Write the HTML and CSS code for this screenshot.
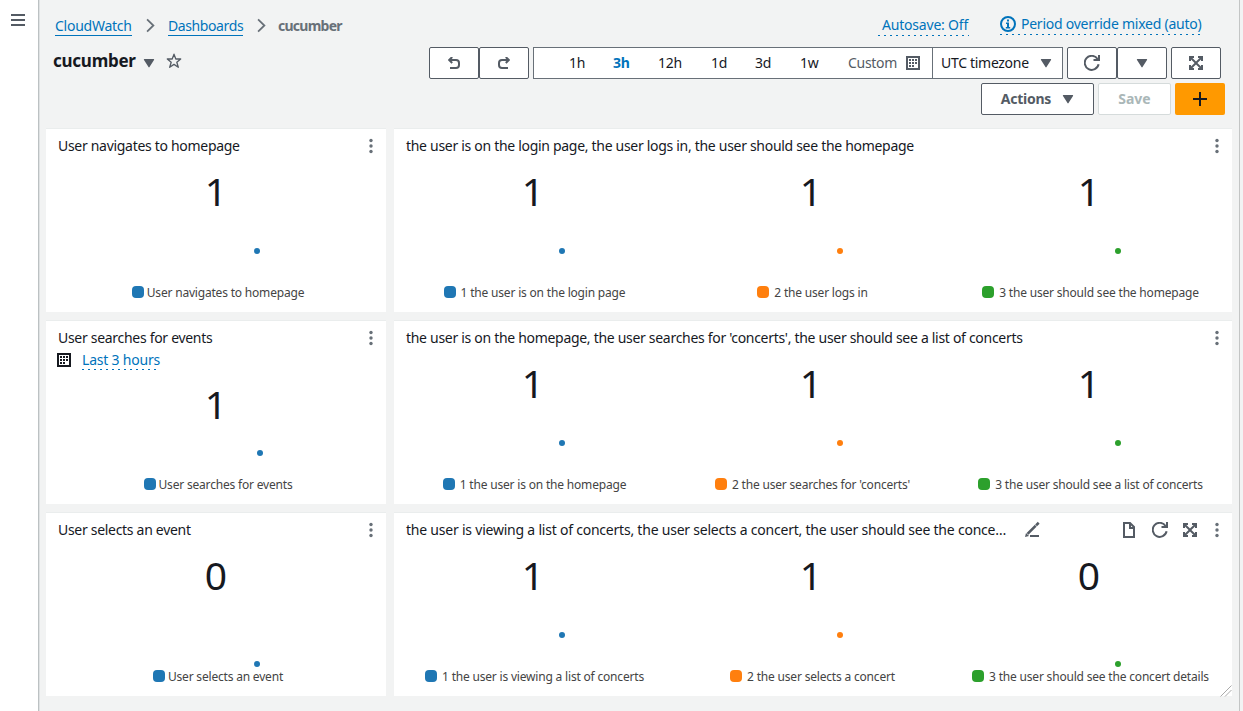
FILE: index.html
```html
<!DOCTYPE html>
<html lang="en">
<head>
<meta charset="utf-8">
<title>CloudWatch dashboard - cucumber</title>
<link rel="stylesheet" href="styles.css">
</head>
<body>
<svg width="0" height="0" class="defs">
  <symbol id="caret" viewBox="0 0 12 10"><path d="M1.5 1h9a.6.6 0 0 1 .5 1L6.5 9a.6.6 0 0 1-1 0L1 2a.6.6 0 0 1 .5-1z" fill="currentColor"/></symbol>
  <symbol id="chev" viewBox="0 0 10 16"><path d="M1.2 1.2 8.2 8l-7 6.8" fill="none" stroke="currentColor" stroke-width="2"/></symbol>
  <symbol id="refresh" viewBox="0 0 16 16"><path d="M14.6 9.3A7 7 0 1 1 13.6 4" fill="none" stroke="currentColor" stroke-width="2"/><path d="M15 0v5H9.500" fill="none" stroke="currentColor" stroke-width="2"/></symbol>
  <symbol id="expand" viewBox="0 0 14 14"><path d="M0 0h5v2H3.4l3.6 3.6L10.600 2H9V0h5v5h-2V3.4L8.400 7l3.6 3.6V9h2v5H9v-2h1.600L7 8.400 3.4 12H5v2H0V9h2v1.600L5.600 7 2 3.400V5H0z" fill="currentColor"/></symbol>
  <symbol id="cal" viewBox="0 0 14 14"><rect x="1" y="1" width="12" height="12" fill="none" stroke="currentColor" stroke-width="2"/><path d="M3 3h2v2H3zM6 3h2v2H6zM9 3h2v2H9zM3 6h2v2H3zM6 6h2v2H6zM9 6h2v2H9zM3 9h2v2H3zM6 9h2v2H6z" fill="currentColor"/></symbol>
  <symbol id="dots" viewBox="0 0 4 16"><g fill="currentColor"><circle cx="2" cy="2.500" r="1.700"/><circle cx="2" cy="8" r="1.700"/><circle cx="2" cy="13.500" r="1.700"/></g></symbol>
  <symbol id="undo" viewBox="0 0 12 12"><path d="M1 3h7a3 3 0 0 1 3 3v2a3 3 0 0 1-3 3H2M4.200 0 1.200 3l3 3" fill="none" stroke="currentColor" stroke-width="2"/></symbol>
</svg>
<div class="app">
  <nav class="rail"><svg class="burger" viewBox="0 0 14 12"><path d="M0 1h14M0 6h14M0 11h14" stroke="currentColor" stroke-width="2"/></svg></nav>
  <main class="main">
    <header class="top">
      <div class="heading">
        <div class="crumbs">
          <a class="crumb c1">CloudWatch</a>
          <svg class="chev"><use href="#chev"/></svg>
          <a class="crumb c2">Dashboards</a>
          <svg class="chev"><use href="#chev"/></svg>
          <span class="here">cucumber</span>
        </div>
        <div class="name"><h1>cucumber</h1><svg class="caret"><use href="#caret"/></svg>
          <svg class="star" viewBox="0 0 16 16"><path d="M8 1.200 9.800 6h4.900l-3.900 3.200L12.300 14.300 8 11.400l-4.300 2.900 1.500-5.100L1.300 6h4.900z" fill="none" stroke="currentColor" stroke-width="1.300" stroke-linejoin="round"/></svg>
        </div>
      </div>
      <div class="controls">
        <div class="links">
          <span class="dotlink autosave">Autosave: Off</span>
          <span class="dotlink period"><svg class="info" viewBox="0 0 16 16"><circle cx="8" cy="8" r="7" fill="none" stroke="currentColor" stroke-width="2"/><path d="M7 3.500h2v2H7zM6 6.500h3V11h1.200v1.500H5.800V11H7V8H6z" fill="currentColor"/></svg><span>Period override mixed (auto)</span></span>
        </div>
        <div class="toolbar">
          <div class="group">
            <button class="btn sq"><svg class="undo"><use href="#undo"/></svg></button>
            <button class="btn sq"><svg class="undo flip"><use href="#undo"/></svg></button>
          </div>
          <div class="ranges">
            <span class="r r1">1h</span><span class="r r2 on">3h</span><span class="r r3">12h</span><span class="r r4">1d</span><span class="r r5">3d</span><span class="r r6">1w</span><span class="r custom">Custom</span><svg class="cal"><use href="#cal"/></svg>
          </div>
          <div class="zone"><span>UTC timezone</span><svg class="caret"><use href="#caret"/></svg></div>
          <div class="group refreshers">
            <button class="btn sq"><svg class="i16"><use href="#refresh"/></svg></button>
            <button class="btn sq"><svg class="caret"><use href="#caret"/></svg></button>
          </div>
          <button class="btn sq"><svg class="i14"><use href="#expand"/></svg></button>
        </div>
        <div class="actions">
          <button class="btn act"><span>Actions</span><svg class="caret"><use href="#caret"/></svg></button>
          <button class="btn save">Save</button>
          <button class="add"><svg class="plus" viewBox="0 0 14 14"><path d="M7 0v14M0 7h14" stroke="currentColor" stroke-width="2"/></svg></button>
        </div>
      </div>
    </header>
    <section class="grid">
      <article class="card">
        <div class="head"><h2>User navigates to homepage</h2><svg class="dots"><use href="#dots"/></svg></div>
        <div class="metrics"><div class="metric blue"><div class="value">1</div><svg class="spark"><circle cx="211" cy="29" r="3"/></svg><div class="legend"><i></i><span>User navigates to homepage</span></div></div></div>
      </article>
      <article class="card wide">
        <div class="head"><h2>the user is on the login page, the user logs in, the user should see the homepage</h2><svg class="dots"><use href="#dots"/></svg></div>
        <div class="metrics">
          <div class="metric blue"><div class="value">1</div><svg class="spark"><circle cx="169" cy="29" r="3"/></svg><div class="legend"><i></i><span>1 the user is on the login page</span></div></div>
          <div class="metric orange"><div class="value">1</div><svg class="spark"><circle cx="169" cy="29" r="3"/></svg><div class="legend"><i></i><span>2 the user logs in</span></div></div>
          <div class="metric green"><div class="value">1</div><svg class="spark"><circle cx="169" cy="29" r="3"/></svg><div class="legend"><i></i><span>3 the user should see the homepage</span></div></div>
        </div>
      </article>
      <article class="card ranged">
        <div class="head"><h2>User searches for events</h2><svg class="dots"><use href="#dots"/></svg></div>
        <div class="period-row"><svg class="cal"><use href="#cal"/></svg><span class="dotlink">Last 3 hours</span></div>
        <div class="metrics"><div class="metric blue"><div class="value">1</div><svg class="spark"><circle cx="214" cy="20" r="3"/></svg><div class="legend"><i></i><span>User searches for events</span></div></div></div>
      </article>
      <article class="card wide">
        <div class="head"><h2>the user is on the homepage, the user searches for 'concerts', the user should see a list of concerts</h2><svg class="dots"><use href="#dots"/></svg></div>
        <div class="metrics">
          <div class="metric blue"><div class="value">1</div><svg class="spark"><circle cx="169" cy="29" r="3"/></svg><div class="legend"><i></i><span>1 the user is on the homepage</span></div></div>
          <div class="metric orange"><div class="value">1</div><svg class="spark"><circle cx="169" cy="29" r="3"/></svg><div class="legend"><i></i><span>2 the user searches for 'concerts'</span></div></div>
          <div class="metric green"><div class="value">1</div><svg class="spark"><circle cx="169" cy="29" r="3"/></svg><div class="legend"><i></i><span>3 the user should see a list of concerts</span></div></div>
        </div>
      </article>
      <article class="card">
        <div class="head"><h2>User selects an event</h2><svg class="dots"><use href="#dots"/></svg></div>
        <div class="metrics"><div class="metric blue"><div class="value">0</div><svg class="spark"><circle cx="211" cy="58" r="3"/></svg><div class="legend"><i></i><span>User selects an event</span></div></div></div>
      </article>
      <article class="card wide">
        <div class="head"><h2 class="clipped">the user is viewing a list of concerts, the user selects a concert, the user should see the conce…</h2>
          <svg class="pencil" viewBox="0 0 16 16"><path d="M6 14h9" stroke="currentColor" stroke-width="2"/><path d="M4.500 11 10.800 4.700M13 2.500l.8-.8" stroke="currentColor" stroke-width="2.600" stroke-linecap="square"/><path d="M1 15l1-4 3 3z" fill="currentColor"/></svg>
          <svg class="doc" viewBox="0 0 12 16"><path d="M1 1h6l4 4v10H1zM7 1v5h4" fill="none" stroke="currentColor" stroke-width="2"/></svg>
          <svg class="i16"><use href="#refresh"/></svg><svg class="i14"><use href="#expand"/></svg><svg class="dots"><use href="#dots"/></svg></div>
        <div class="metrics">
          <div class="metric blue"><div class="value">1</div><svg class="spark"><circle cx="169" cy="29" r="3"/></svg><div class="legend"><i></i><span>1 the user is viewing a list of concerts</span></div></div>
          <div class="metric orange"><div class="value">1</div><svg class="spark"><circle cx="169" cy="29" r="3"/></svg><div class="legend"><i></i><span>2 the user selects a concert</span></div></div>
          <div class="metric green"><div class="value">0</div><svg class="spark"><circle cx="169" cy="58" r="3"/></svg><div class="legend"><i></i><span>3 the user should see the concert details</span></div></div>
        </div>
        <svg class="grip" viewBox="0 0 12 12"><path d="M.5 11.500 11.500.5M5 11.500l6.500-6.500" stroke="#aaa" stroke-width="1"/></svg>
      </article>
    </section>
  </main>
  <aside class="edge"></aside>
</div>
</body>
</html>
```
FILE: styles.css
```css
* { box-sizing: border-box; }
body { margin: 0; background: #f2f3f3; color: #16191f; font: 14px/22px "Noto Sans", "Open Sans", sans-serif; letter-spacing: -0.3px; overflow: hidden; }
svg { display: block; flex: none; overflow: visible; }
.defs { position: absolute; }
h1, h2 { margin: 0; font-weight: 400; white-space: nowrap; }
span, a { white-space: nowrap; }
.app { display: flex; width: 1243px; height: 711px; }
.rail { width: 38px; background: #fff; padding: 14px 0 0 11px; color: #545b64; }
.burger { width: 14px; height: 12px; }
.main { width: 1201px; border-left: 1px solid #bcc1c3; box-shadow: inset 1px 0 0 #dfe2e3; padding-left: 1px; background: #f2f3f3; }
.edge { width: 4px; border-left: 1px solid #c3c5c5; background: #f2f3f3; }
.top { display: flex; justify-content: space-between; height: 128px; color: #545b64; }

.heading { padding: 15px 0 0 13px; }
.crumbs { display: flex; align-items: center; height: 22px; margin-left: 2px; }
.crumb { color: #0073bb; line-height: 18px; border-bottom: 1px solid #0073bb; letter-spacing: -0.25px; }
.c1 { width: 77px; }
.c2 { width: 75px; letter-spacing: -0.4px; }
.chev { width: 9px; height: 15px; margin: -2px 13px 0 14px; color: #687078; }
.c2 + .chev { margin-right: 12px; }
.here { font-weight: 700; color: #687078; letter-spacing: -0.75px; }
.name { display: flex; align-items: center; height: 24px; margin-top: 12px; color: #545b64; }
h1 { width: 83px; font-size: 17px; font-weight: 700; line-height: 24px; color: #16191f; letter-spacing: -0.25px; }
.caret { width: 12px; height: 10px; }
.name .caret { margin: 3px 0 0 7px; }
.star { width: 16px; height: 16px; margin-left: 11px; }

.controls { width: 810px; flex: none; padding: 14px 14px 0 0; }
.links { display: flex; justify-content: flex-end; gap: 31px; height: 33px; padding-right: 24px; }
.dotlink { color: #0073bb; height: 21px; background: repeating-linear-gradient(90deg, #0073bb 0 2px, transparent 2px 6px) left bottom / 100% 1px no-repeat; }
.autosave { width: 91px; padding-left: 4px; margin-top: 1px; line-height: 20px; letter-spacing: -0.2px; }
.period { display: flex; width: 201px; line-height: 20px; gap: 5px; letter-spacing: -0.25px; }
.info { width: 16px; height: 16px; margin-top: 2px; }
.toolbar { display: flex; height: 32px; padding-right: 4px; justify-content: flex-end; }
.group { display: flex; margin-right: 4px; }
.btn { display: flex; flex: none; align-items: center; justify-content: center; height: 32px; padding: 0; background: #fff; border: 1px solid #545b64; border-radius: 2px; color: #545b64; font: 700 14px/22px "Noto Sans", sans-serif; }
.sq { width: 50px; }
.undo { width: 12px; height: 12px; }
.flip { transform: scaleX(-1); }
.ranges { display: flex; flex: none; align-items: center; width: 400px; background: #fff; border: 1px solid #687078; color: #16191f; padding-left: 35px; }
.r { flex: none; }
.r1 { width: 44px; }
.r2 { width: 45px; }
.r3 { width: 53px; }
.r4 { width: 44px; }
.r5 { width: 45px; }
.r6 { width: 48px; }
.on { font-weight: 700; color: #0073bb; }
.custom { width: 58px; color: #545b64; }
.cal { width: 14px; height: 14px; color: #545b64; }
.zone { display: flex; flex: none; align-items: center; justify-content: space-between; width: 131px; margin-left: -1px; padding: 0 10px 0 8px; background: #fff; border: 1px solid #687078; color: #16191f; }
.zone .caret { color: #545b64; }
.refreshers { margin-left: 4px; }
.i16 { width: 16px; height: 16px; }
.i14 { width: 14px; height: 14px; }
.actions { display: flex; justify-content: flex-end; gap: 4px; margin-top: 4px; }
.act { width: 113px; gap: 11px; letter-spacing: -0.25px; }
.save { width: 73px; color: #aab7b8; border-color: #d5dbdb; }
.add { display: flex; align-items: center; justify-content: center; width: 50px; height: 32px; padding: 0; border: 0; border-radius: 2px; background: #ff9900; color: #16191f; }
.plus { width: 14px; height: 14px; }

.grid { display: grid; grid-template-columns: 340px 838px; grid-auto-rows: 184px; gap: 8px; padding-left: 6px; }
.card { position: relative; background: #fff; border-top: 1px solid #eaeded; display: flex; flex-direction: column; }
.head { display: flex; align-items: center; height: 35px; padding: 0 13px 2px 12px; color: #545b64; }
h2 { font-size: 14px; line-height: 22px; color: #16191f; }
.head .dots { margin-left: auto; width: 4px; height: 16px; color: #687078; }
.pencil { width: 16px; height: 16px; margin-left: 18px; }
.clipped { width: 600px; letter-spacing: -0.22px; }
.doc { width: 12px; height: 16px; margin-left: 83px; }
.doc + .i16 { margin: 0 15px 0 17px; }
.period-row { display: flex; gap: 11px; height: 22px; padding: 0 11px; margin-top: -7px; margin-bottom: 7px; }
.period-row .cal { margin-top: 4px; color: #16191f; }
.period-row .dotlink { height: 21px; letter-spacing: -0.2px; }
.metrics { display: flex; }
.metric { width: 340px; }
.wide .metric { width: 278px; }
.wide .metrics { margin-left: -1px; }
.value { height: 58px; font-size: 39px; line-height: 53px; letter-spacing: 0; text-align: center; color: #16191f; }
.wide .value { padding-left: 2px; }
.ranged .value { height: 55px; line-height: 51px; }
.spark { width: 100%; height: 59px; fill: currentColor; }
.ranged .spark { height: 40px; }
.legend { display: flex; align-items: center; justify-content: center; height: 23px; padding-left: 4px; gap: 3px; font-size: 12px; letter-spacing: -0.19px; }
.wide .legend { padding-left: 5px; gap: 5px; }
.legend i { width: 12px; height: 12px; margin-top: -1px; border-radius: 4px; background: currentColor; }
.legend span { color: #444; }
.blue { color: #1f77b4; }
.orange { color: #ff7f0e; }
.green { color: #2ca02c; }
.grip { position: absolute; right: 0; bottom: -1px; width: 12px; height: 12px; }
```
